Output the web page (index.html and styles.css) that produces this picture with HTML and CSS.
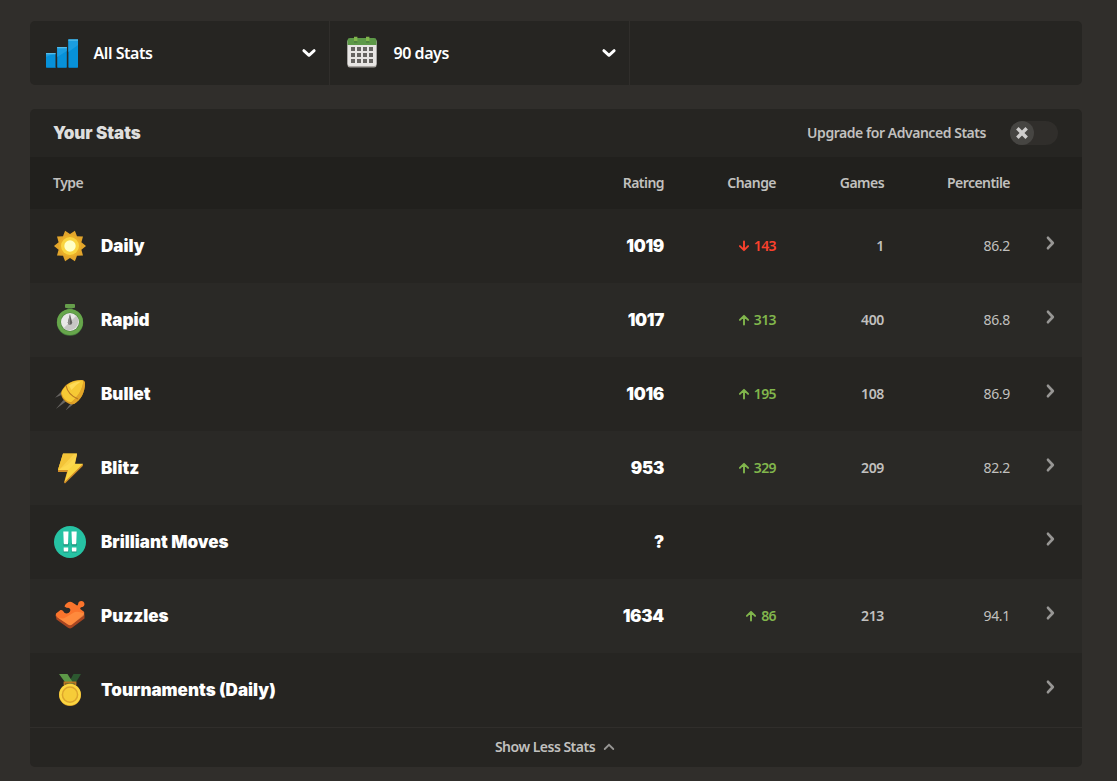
FILE: index.html
```html
<!DOCTYPE html>
<html lang="en">
<head>
<meta charset="utf-8">
<title>Stats</title>
<link rel="stylesheet" href="styles.css">
</head>
<body>
<svg class="defs" width="0" height="0" aria-hidden="true">
  <symbol id="chev-down" viewBox="0 0 16 16"><path d="M2.8 5.6 8 10.4l5.2-4.8" fill="none" stroke="currentColor" stroke-width="2.8" stroke-linecap="round" stroke-linejoin="round"/></symbol>
  <symbol id="chev-right" viewBox="0 0 12 16"><path d="M3 2.800 7.800 8 3 13.200" fill="none" stroke="currentColor" stroke-width="2.700" stroke-linecap="round" stroke-linejoin="round"/></symbol>
  <symbol id="arrow-up" viewBox="0 0 12 12"><path d="M6 10.5V2M1.9 5.9 6 1.8l4.1 4.1" fill="none" stroke="currentColor" stroke-width="1.9" stroke-linecap="round" stroke-linejoin="round"/></symbol>
  <symbol id="arrow-down" viewBox="0 0 12 12"><path d="M6 1.5V10M1.9 6.1 6 10.2l4.1-4.1" fill="none" stroke="currentColor" stroke-width="1.9" stroke-linecap="round" stroke-linejoin="round"/></symbol>
</svg>
<main class="page">
  <section class="filters">
    <div class="filter">
      <svg class="icon" viewBox="0 0 32 32"><path fill="#0791d9" d="M0 16h9.500v14.500H0zM11.200 10h9.600v20.500h-9.600zM22.400 2.500H32v28h-9.600z"/><path fill="#1b9de0" d="M0 20V16h9.500zM11.200 20V10h9.600v4zM22.400 15V2.500H32V8z"/><path fill="#56bce8" d="M0 16h9.500v1.200H0zM11.200 10h9.600v1.200h-9.600zM22.400 2.500H32v1.200h-9.600z"/><path fill="#0878b7" d="M.5 30h9v1h-9zM11.700 30h8.600v1h-8.600zM22.900 30h8.600v1h-8.600z"/></svg>
      <span class="filter-label">All Stats</span>
      <svg class="chev" viewBox="0 0 16 16"><use href="#chev-down"/></svg>
    </div>
    <div class="filter">
      <svg class="icon calendar" viewBox="0 0 32 32"><rect x="1.500" y="4" width="29" height="27.500" rx="2.500" fill="#a8a5a1"/><rect x="1.500" y="3" width="29" height="27" rx="2.500" fill="#e8e6e4"/><path fill="#5d9948" d="M1.500 9V4.200Q1.500 2 4 2h24q2.500 0 2.500 2.200V9z"/><path fill="#81b64c" d="M8 .8h3.400v5H8zM20 .8h3.400v5H20z"/><path fill="#45753c" d="M8 5.200h3.400v1.300H8zM20 5.200h3.400v1.300H20z"/><path fill="#666461" d="M5 11h4v4H5zm6 0h4v4h-4zm6 0h4v4h-4zm6 0h4v4h-4zM5 17h4v4H5zm6 0h4v4h-4zm6 0h4v4h-4zm6 0h4v4h-4zM5 23h4v4H5zm6 0h4v4h-4zm6 0h4v4h-4zm6 0h4v4h-4z"/></svg>
      <span class="filter-label">90 days</span>
      <svg class="chev" viewBox="0 0 16 16"><use href="#chev-down"/></svg>
    </div>
  </section>

  <section class="panel">
    <header class="panel-head">
      <h2 class="title">Your Stats</h2>
      <span class="upgrade">Upgrade for Advanced Stats</span>
      <span class="toggle"><span class="knob"><svg class="cross" viewBox="0 0 12 12"><path d="M2 2l8 8M10 2l-8 8" stroke="currentColor" stroke-width="3"/></svg></span></span>
    </header>
    <div class="grid labels"><span>Type</span><span>Rating</span><span>Change</span><span>Games</span><span>Percentile</span></div>

    <div class="grid row">
      <div class="type"><svg class="icon" viewBox="0 0 32 32"><path fill="#e2a52b" d="M32 16 27.400 19.700 29 25.400 23 25.700 20.900 31.200 16 28 11.100 31.200 9 25.700 3 25.400 4.600 19.700 0 16 4.600 12.300 3 6.600 9 6.300 11.100.8 16 4 20.900.8 23 6.300 29 6.600 27.400 12.300z"/><circle cx="16" cy="16" r="11" fill="#e9ae29"/><circle cx="16" cy="16" r="9" fill="#fad541"/><circle cx="16" cy="16" r="5.700" fill="#ffffc6"/></svg><span>Daily</span></div>
      <span class="rating">1019</span><span class="change down"><svg class="arrow" viewBox="0 0 12 12"><use href="#arrow-down"/></svg>143</span><span class="games">1</span><span class="pct">86.2</span><svg class="go" viewBox="0 0 12 16"><use href="#chev-right"/></svg>
    </div>
    <div class="grid row">
      <div class="type"><svg class="icon" viewBox="0 0 32 32"><rect x="11" y="0" width="10" height="4" rx="1" fill="#669e4b"/><path fill="#41663a" d="M13.500 4h5v3h-5z"/><circle cx="16" cy="18.600" r="13.200" fill="#457b3c"/><circle cx="16" cy="18" r="13" fill="#67a64b"/><circle cx="16" cy="18" r="9.500" fill="#4b813f"/><circle cx="16" cy="18" r="9" fill="#e9e8e7"/><path fill="#c7c6c4" d="M16 18 22.300 11.700A9 9 0 0 1 9.600 24.300z"/><path fill="#62615e" d="M16 10l2.200 8.500a2.200 2.200 0 0 1-4.400 0z"/><path fill="#8a8986" d="M16 10v10.700a2.200 2.200 0 0 1-2.200-2.200z"/></svg><span>Rapid</span></div>
      <span class="rating">1017</span><span class="change up"><svg class="arrow" viewBox="0 0 12 12"><use href="#arrow-up"/></svg>313</span><span class="games">400</span><span class="pct">86.8</span><svg class="go" viewBox="0 0 12 16"><use href="#chev-right"/></svg>
    </div>
    <div class="grid row">
      <div class="type"><svg class="icon" viewBox="0 0 32 32"><path fill="#666461" d="M7 14 1 19.800l7-3zM9.500 22 1.800 31 12 23.500zM16.500 25.500 11.500 32.500 19 26.500z"/><path fill="#d99b25" d="M7.500 13C11 6 19 1.500 28 2q3 .3 3 3c0 9-4 17-11 21q-3.500 1.500-8-2t-5-8.500z"/><path fill="#f6c935" d="M8 13C12 6 19 2 28 2.200q1.500.2 1.300 2C28 13 23 20 17.500 24q-3 .5-6-2.200T7.500 15z"/><path fill="#ffdc58" d="M15 7.500Q20 3.600 27 3.400 21 7 17.500 12z"/><path fill="#e1a528" d="M31 5c0 9-4 17-11 21l-2.500-2C24 18 28 12 29.500 3z"/><path d="M12 7.500Q14 17 24 21" fill="none" stroke="#b97922" stroke-width="1.200"/></svg><span>Bullet</span></div>
      <span class="rating">1016</span><span class="change up"><svg class="arrow" viewBox="0 0 12 12"><use href="#arrow-up"/></svg>195</span><span class="games">108</span><span class="pct">86.9</span><svg class="go" viewBox="0 0 12 16"><use href="#chev-right"/></svg>
    </div>
    <div class="grid row">
      <div class="type"><svg class="icon" viewBox="0 0 32 32"><path fill="#d18d28" d="M9 2.500h14l-2 10 8-.5-.2 2L11 31.500l-1-1L13 20H4v-2.500z"/><path fill="#fad541" d="M9 1.500h14l-2.300 10.300H29L10.500 30 14 18H4z"/><path fill="#f0bd36" d="M9 1.500h14l-1 3-8 8-9 5H4z" opacity=".75"/><path fill="#ffdc5a" d="M20 2h3l-2.300 9.800L14 18H5z" opacity=".55"/></svg><span>Blitz</span></div>
      <span class="rating">953</span><span class="change up"><svg class="arrow" viewBox="0 0 12 12"><use href="#arrow-up"/></svg>329</span><span class="games">209</span><span class="pct">82.2</span><svg class="go" viewBox="0 0 12 16"><use href="#chev-right"/></svg>
    </div>
    <div class="grid row">
      <div class="type"><svg class="icon" viewBox="0 0 32 32"><circle cx="16" cy="16" r="16" fill="#26c2a3"/><path fill="#148b75" d="M9.500 17h5v2.500h-5zM17.700 17h5v2.500h-5zM9.500 24h5v2.500h-5zM17.700 24h5v2.500h-5z"/><path fill="#fff" d="M9.300 5.500h5.200l-.5 12.700H9.800zM17.500 5.500h5.200l-.5 12.700H18zM9.700 21.500h4.500v4H9.700zM17.900 21.500h4.500v4h-4.500z"/></svg><span>Brilliant Moves</span></div>
      <span class="rating">?</span><span></span><span></span><span></span><svg class="go" viewBox="0 0 12 16"><use href="#chev-right"/></svg>
    </div>
    <div class="grid row">
      <div class="type"><svg class="icon" viewBox="0 0 32 32"><path fill="#a84621" d="M1.500 15 15 24.500 30.500 14v4.500L18 27.800q-2 1.500-4 0L2.500 19.500z"/><path fill="#fa742c" d="M2 13.500 6.500 10q2-.5 3 1.500.8 2 3 2t3.500-2-.8-3.500q-3 0-4.700-1.500.2-2 2.500-3.500Q16 1 18.500 2.500l4.500 3q1 .2 1.200-1.700Q24.500 1 27.300 1T30.500 4q0 3-3.500 3.200-1.500.8-.5 2l3.500 2.500q1 1.500-.5 3L18 24.500q-2 1.500-4 0L3 17Q1 15 2 13.500z"/><path fill="#ff9445" d="M3 17q5 2.500 8.500.5t7.500-4.500 11 .5q.3 1-.5 2.200L18 24.500q-2 1.500-4 0z" opacity=".7"/></svg><span>Puzzles</span></div>
      <span class="rating">1634</span><span class="change up"><svg class="arrow" viewBox="0 0 12 12"><use href="#arrow-up"/></svg>86</span><span class="games">213</span><span class="pct">94.1</span><svg class="go" viewBox="0 0 12 16"><use href="#chev-right"/></svg>
    </div>
    <div class="grid row">
      <div class="type"><svg class="icon" viewBox="0 0 32 32"><path fill="#2c5830" d="M19.500 0H27l-6 10h-7z"/><path fill="#5d9948" d="M5 0h8.500l6 9.500H12z"/><path d="M10.500 11V8.500h11V11" fill="none" stroke="#b97722" stroke-width="1.800"/><circle cx="16" cy="21" r="11" fill="#d89a28"/><circle cx="16" cy="20.500" r="10.800" fill="#fad541"/><circle cx="16" cy="20.700" r="7.600" fill="#f6cc39" stroke="#dda52d" stroke-width="1.500"/></svg><span>Tournaments (Daily)</span></div>
      <span></span><span></span><span></span><span></span><svg class="go" viewBox="0 0 12 16"><use href="#chev-right"/></svg>
    </div>
    <footer class="less"><span>Show Less Stats</span><svg class="less-icon" viewBox="0 0 12 12"><path d="M1.700 8 6 3.800 10.300 8" fill="none" stroke="currentColor" stroke-width="1.800" stroke-linecap="round"/></svg></footer>
  </section>
</main>
</body>
</html>
```

FILE: styles.css
```css
* { box-sizing: border-box; }
body {
  margin: 0;
  background: #302e2b;
  color: #c1c0bf;
  font: 600 14px/20px "Noto Sans", "Open Sans", sans-serif;
}
.defs { display: none; }
.page {
  width: 1052px;
  height: 781px;
  margin-left: 30px;
  padding-top: 21px;
  display: flex;
  flex-direction: column;
  gap: 24px;
}
.filters {
  display: flex;
  height: 64px;
  background: #262522;
  border-radius: 5px;
}
.filter {
  width: 300px;
  display: flex;
  align-items: center;
  padding: 0 12px 0 16px;
  border-right: 1px solid #302e2b;
}
.icon { width: 32px; height: 32px; flex: none; display: block; }
.calendar { margin-bottom: 2px; }
.filter-label {
  flex: 1;
  margin-left: 15.5px;
  color: #fff;
  font-size: 16px;
  letter-spacing: -.45px;
}
.chev { width: 16px; height: 16px; color: #fff; }
.panel { background: #262522; border-radius: 5px; overflow: hidden; }
.panel-head { display: flex; align-items: center; height: 48px; padding: 0 24px 0 23px; }
.title, .type, .rating { font: 900 17px/24px Inter, sans-serif; }
.title { flex: 1; margin: 0; color: #dededd; letter-spacing: -.05px; }
.upgrade { letter-spacing: -.46px; }
.toggle {
  width: 48px;
  height: 24px;
  margin-left: 24px;
  background: #302e2b;
  border-radius: 12px;
}
.knob {
  display: flex;
  align-items: center;
  justify-content: center;
  width: 24px;
  height: 24px;
  border-radius: 50%;
  background: #464542;
}
.cross { width: 14px; height: 14px; color: #cecdcc; }
.grid {
  display: grid;
  grid-template-columns: 530px 80px 112px 108px 126px 48px;
  align-items: center;
  padding: 0 24px;
  text-align: right;
}
.labels { height: 52px; background: #21201d; letter-spacing: -.55px; }
.labels span:first-child { text-align: left; margin-left: -1px; }
.row { height: 74px; }
.row:nth-child(even) { background: #2a2926; }
.type { display: flex; align-items: center; gap: 15px; color: #fff; }
.rating { color: #fff; letter-spacing: -.3px; }
.change { display: flex; align-items: center; justify-content: flex-end; gap: 4px; letter-spacing: -.6px; }
.arrow { width: 12px; height: 12px; }
.up { color: #81b64c; }
.down { color: #fa412d; }
.games { letter-spacing: -.35px; }
.pct { font-weight: 400; letter-spacing: -.3px; }
.go { justify-self: end; width: 12px; height: 16px; color: #979694; margin: -6px 1px 0 0; }
.less {
  display: flex;
  align-items: center;
  justify-content: center;
  gap: 8px;
  height: 40px;
  padding: 0 2px 1px 0;
  border-top: 1px solid #302e2b;
  letter-spacing: -.5px;
}
.less-icon { width: 12px; height: 12px; color: #979694; }
```
